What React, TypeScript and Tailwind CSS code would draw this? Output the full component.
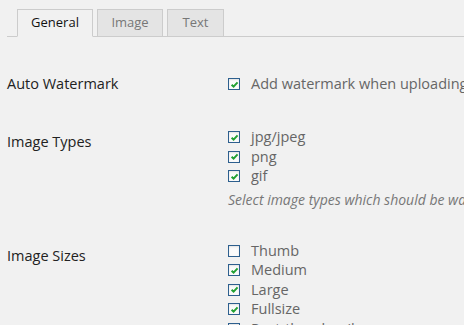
const font = { fontFamily: '"Open Sans", "Liberation Sans", sans-serif' };

type Opt = { label: string; checked: boolean };

function Check({ checked }: { checked: boolean }) {
  return (
    <span className="flex h-[12px] w-[12px] shrink-0 items-center justify-center border border-[#2d5f8e] bg-[#fbfbfb] shadow-[inset_0_1px_2px_rgba(0,0,0,0.1)]">
      {checked && (
        <svg viewBox="0 0 10 10" className="h-[9px] w-[9px]">
          <path d="M1.8 5.2 L4 7.4 L8.4 2.6" fill="none" stroke="#22a033" strokeWidth="2.2" />
        </svg>
      )}
    </span>
  );
}

function OptionRow({ label, checked }: Opt) {
  return (
    <div className="flex h-[19.5px] items-center gap-[11px] text-[14.5px] text-[#666]">
      <Check checked={checked} />
      <span className="whitespace-nowrap">{label}</span>
    </div>
  );
}

const tabs = [
  { name: 'General', w: 'w-[76px]', active: true },
  { name: 'Image', w: 'w-[66px]', active: false },
  { name: 'Text', w: 'w-[57px]', active: false },
];

export default function App() {
  return (
    <div style={font} className="h-[325px] w-[464px] overflow-hidden bg-[#f1f1f1]">
      <div className="ml-[7px] flex gap-[4px] border-b border-[#ccc] pl-[10px] pt-[9px]">
        {tabs.map((t) => (
          <div
            key={t.name}
            className={
              t.active
                ? `${t.w} -mb-px flex h-[28px] items-center justify-center border border-[#ccc] border-b-[#f1f1f1] bg-[#f1f1f1] text-[13px] font-medium text-[#111]`
                : `${t.w} -mb-px flex h-[28px] items-center justify-center border border-[#ccc] bg-[#e4e4e4] text-[13px] text-[#777]`
            }
          >
            {t.name}
          </div>
        ))}
      </div>

      <div className="mt-[37px] flex">
        <div className="w-[228px] shrink-0 pl-[7px] text-[14.5px] leading-[20px] text-[#222]">Auto Watermark</div>
        <div className="flex h-[20px] items-center gap-[11px] text-[14.5px] text-[#666]">
          <Check checked />
          <span className="whitespace-nowrap">Add watermark when uploading images</span>
        </div>
      </div>

      <div className="mt-[33.5px] flex">
        <div className="w-[228px] shrink-0 pl-[7px] pt-[4.5px] text-[14.5px] leading-[20px] text-[#222]">Image Types</div>
        <div>
          <OptionRow label="jpg/jpeg" checked />
          <OptionRow label="png" checked />
          <OptionRow label="gif" checked />
          <p className="mt-[4px] whitespace-nowrap text-[14px] leading-[20px] text-[#777] italic">
            Select image types which should be watermarked.
          </p>
        </div>
      </div>

      <div className="mt-[31px] flex">
        <div className="w-[228px] shrink-0 pl-[7px] pt-[5px] text-[14.5px] leading-[20px] text-[#222]">Image Sizes</div>
        <div>
          <OptionRow label="Thumb" checked={false} />
          <OptionRow label="Medium" checked />
          <OptionRow label="Large" checked />
          <OptionRow label="Fullsize" checked />
          <OptionRow label="Post-thumbnail" checked />
        </div>
      </div>
    </div>
  );
}
